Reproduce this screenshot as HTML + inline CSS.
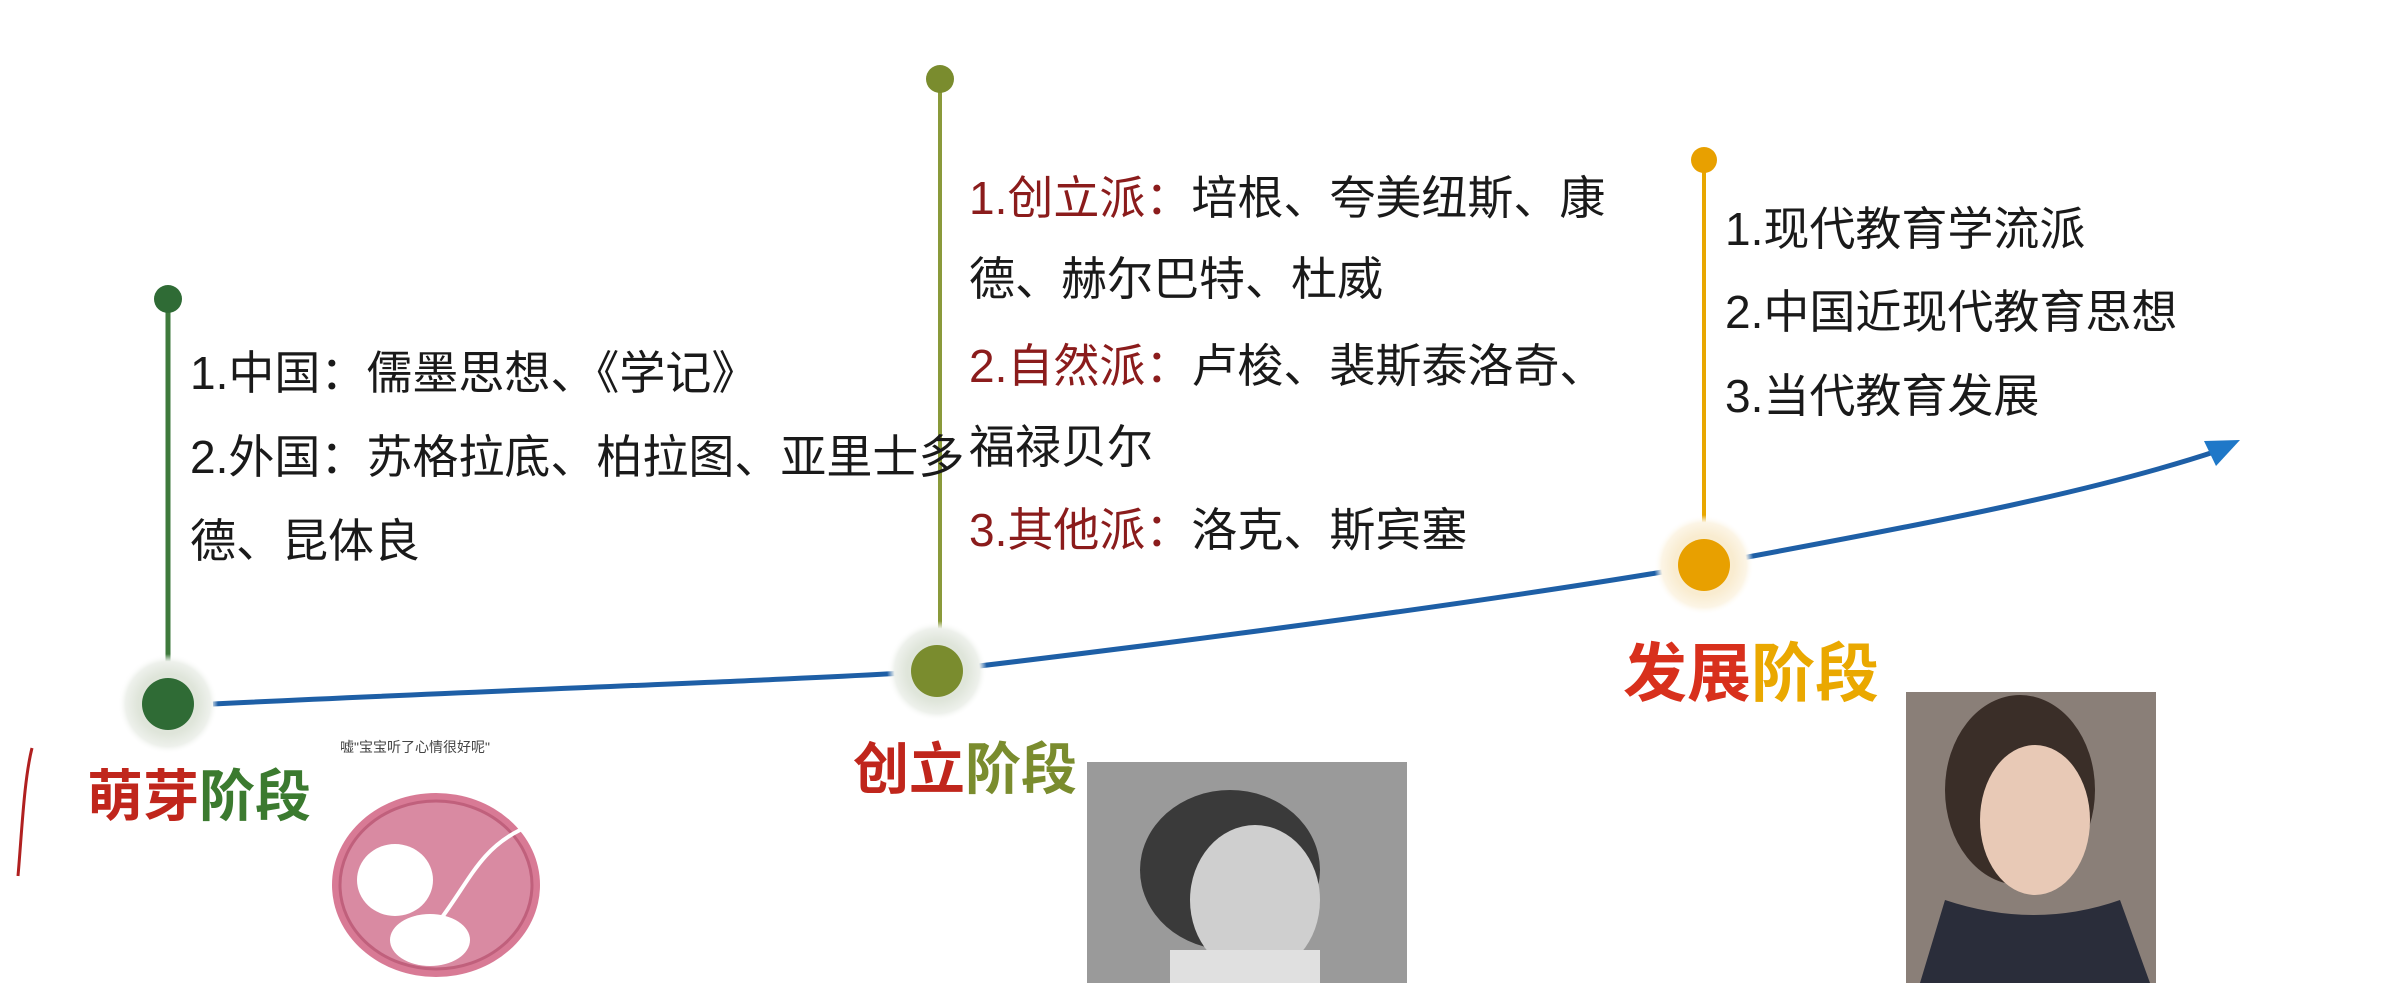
<!DOCTYPE html>
<html><head><meta charset="utf-8"><style>
html,body{margin:0;padding:0;background:#fff;}
body{width:2390px;height:983px;position:relative;overflow:hidden;font-family:"Liberation Sans","Noto Sans CJK SC",sans-serif;}
.t{position:absolute;font-size:46px;color:#1a1a1a;white-space:nowrap;line-height:1;}
.r{color:#8b1c1c;}
.st{position:absolute;font-size:56px;font-weight:bold;white-space:nowrap;line-height:1;}
</style></head><body>
<svg width="2390" height="983" style="position:absolute;left:0;top:0">
<defs>
<radialGradient id="h1"><stop offset="0.6" stop-color="#dfe5da"/><stop offset="0.85" stop-color="#eef1ec"/><stop offset="1" stop-color="#fff" stop-opacity="0"/></radialGradient>
<radialGradient id="h3"><stop offset="0.6" stop-color="#f9ecd0"/><stop offset="0.85" stop-color="#fcf5e6"/><stop offset="1" stop-color="#fff" stop-opacity="0"/></radialGradient>
</defs>
<path d="M213 704 C 500 690, 800 680, 937 671 C 1200 640, 1500 600, 1704 565 C 1950 520, 2100 490, 2220 450" fill="none" stroke="#1e5fa6" stroke-width="5"/>
<polygon points="2240,440 2204,441 2216,466" fill="#1f78c8"/>
<line x1="168" y1="299" x2="168" y2="680" stroke="#3e7a3c" stroke-width="5"/>
<circle cx="168" cy="299" r="14" fill="#2f6b35"/>
<circle cx="168" cy="704" r="50" fill="url(#h1)"/>
<circle cx="168" cy="704" r="26" fill="#2f6b35"/>
<line x1="940" y1="79" x2="940" y2="650" stroke="#8a9a3a" stroke-width="4"/>
<circle cx="940" cy="79" r="14" fill="#7a8c2e"/>
<circle cx="937" cy="671" r="50" fill="url(#h1)"/>
<circle cx="937" cy="671" r="26" fill="#7a8c2e"/>
<line x1="1704" y1="160" x2="1704" y2="540" stroke="#e8a700" stroke-width="4"/>
<circle cx="1704" cy="160" r="13" fill="#e8a000"/>
<circle cx="1704" cy="565" r="50" fill="url(#h3)"/>
<circle cx="1704" cy="565" r="26" fill="#e8a000"/>
<path d="M32 748 C 24 780, 22 830, 18 876" fill="none" stroke="#b02020" stroke-width="3"/>
<ellipse cx="436" cy="885" rx="104" ry="92" fill="#d87a95"/>
<ellipse cx="436" cy="885" rx="96" ry="84" fill="#d98aa2" stroke="#c0607c" stroke-width="3"/>
<ellipse cx="395" cy="880" rx="38" ry="36" fill="#fff"/>
<ellipse cx="430" cy="940" rx="40" ry="26" fill="#fff"/>
<path d="M440 920 C 470 880, 480 850, 520 830" fill="none" stroke="#fff" stroke-width="4"/>
<text x="340" y="752" font-size="14" fill="#444" font-family="Liberation Sans,Noto Sans CJK SC,sans-serif">嘘"宝宝听了心情很好呢"</text>
<rect x="1087" y="762" width="320" height="221" fill="#9a9a9a"/>
<ellipse cx="1230" cy="870" rx="90" ry="80" fill="#3a3a3a"/>
<ellipse cx="1255" cy="900" rx="65" ry="75" fill="#cfcfcf"/>
<rect x="1170" y="950" width="150" height="33" fill="#e0e0e0"/>
<rect x="1906" y="692" width="250" height="291" fill="#8a7f78"/>
<ellipse cx="2020" cy="790" rx="75" ry="95" fill="#3a2e28"/>
<ellipse cx="2035" cy="820" rx="55" ry="75" fill="#e8c9b6"/>
<path d="M1920 983 L1945 900 Q2035 930 2120 900 L2150 983 Z" fill="#2a2d3a"/>
</svg>
<div class="t" style="left:190px;top:350px">1.中国：儒墨思想、《学记》</div>
<div class="t" style="left:190px;top:434px">2.外国：苏格拉底、柏拉图、亚里士多</div>
<div class="t" style="left:190px;top:518px">德、昆体良</div>
<div class="t" style="left:969px;top:175px"><span class="r">1.创立派：</span>培根、夸美纽斯、康</div>
<div class="t" style="left:969px;top:256px">德、赫尔巴特、杜威</div>
<div class="t" style="left:969px;top:343px"><span class="r">2.自然派：</span>卢梭、裴斯泰洛奇、</div>
<div class="t" style="left:969px;top:424px">福禄贝尔</div>
<div class="t" style="left:969px;top:507px"><span class="r">3.其他派：</span>洛克、斯宾塞</div>
<div class="t" style="left:1725px;top:206px">1.现代教育学流派</div>
<div class="t" style="left:1725px;top:289px">2.中国近现代教育思想</div>
<div class="t" style="left:1725px;top:373px">3.当代教育发展</div>
<div class="st" style="left:87px;top:769px"><span style="color:#c0261c">萌芽</span><span style="color:#3b7a2f">阶段</span></div>
<div class="st" style="left:853px;top:742px"><span style="color:#c0261c">创立</span><span style="color:#7a8c2e">阶段</span></div>
<div class="st" style="left:1623px;top:642px;font-size:64px"><span style="color:#d8301c">发展</span><span style="color:#eaa800">阶段</span></div>
</body></html>
